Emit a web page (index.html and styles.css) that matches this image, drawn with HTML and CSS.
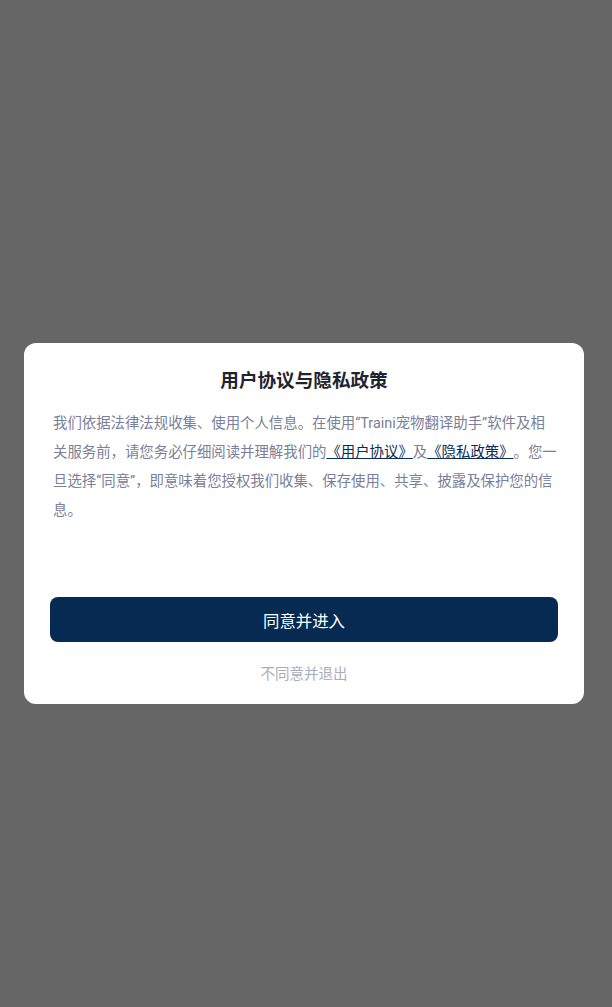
FILE: index.html
```html
<!DOCTYPE html>
<html lang="zh-CN">
<head>
    <meta charset="UTF-8">
    <title>用户协议与隐私政策</title>
    <link rel="stylesheet" href="styles.css">
</head>
<body>
    <div class="overlay">
        <div class="dialog">
            <h1 class="dialog-title">用户协议与隐私政策</h1>
            <p class="dialog-text">我们依据法律法规收集、使用个人信息。在使用“Traini宠物翻译助手”软件及相关服务前，请您务必仔细阅读并理解我们的<a class="link" href="#">《用户协议》</a>及<a class="link" href="#">《隐私政策》</a>。您一旦选择“同意”，即意味着您授权我们收集、保存使用、共享、披露及保护您的信息。</p>
            <button class="btn-agree">同意并进入</button>
            <button class="btn-decline">不同意并退出</button>
        </div>
    </div>
</body>
</html>
```

FILE: styles.css
```css
html, body {
    margin: 0;
    padding: 0;
    height: 100%;
}
body {
    background: #666666;
    font-family: Roboto, "Noto Sans CJK SC", sans-serif;
}
.overlay {
    min-height: 100%;
    padding: 343px 28px 0 24px;
    box-sizing: border-box;
}
.dialog {
    background: #fff;
    border-radius: 12px;
    padding: 26px 26px 15px;
    display: flex;
    flex-direction: column;
    align-items: stretch;
}
.dialog-title {
    margin: 0;
    text-align: center;
    font-size: 18.6px;
    font-weight: bold;
    line-height: 24px;
    color: #1f2430;
}
.dialog-text {
    margin: 16px 0 0 3px;
    font-size: 14.4px;
    line-height: 29px;
    color: #7a8099;
    min-height: 170px;
    text-spacing-trim: space-all;
}
.link {
    color: #0a2b55;
    text-decoration: underline;
}
.btn-agree {
    margin-top: 18px;
    height: 45px;
    border: none;
    border-radius: 8px;
    background: #062a52;
    color: #fff;
    font-family: inherit;
    font-size: 16.4px;
}
.btn-decline {
    margin-top: 19px;
    border: none;
    background: none;
    color: #a9adb8;
    font-family: inherit;
    font-size: 14.5px;
    line-height: 26px;
}
```
